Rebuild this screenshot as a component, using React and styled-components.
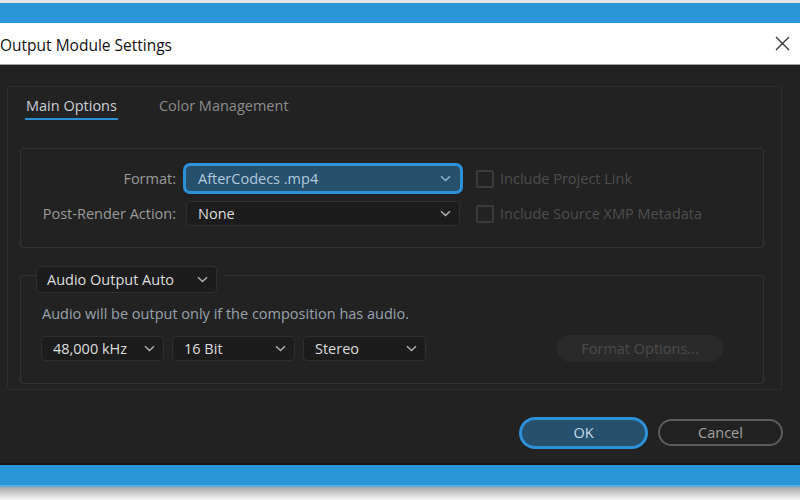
import React from "react";
import styled, { createGlobalStyle } from "styled-components";

const GlobalStyle = createGlobalStyle`
  html, body {
    margin: 0;
    padding: 0;
  }
  body {
    width: 800px;
    height: 500px;
    overflow: hidden;
    background: #f4f4f4;
    font-family: "Open Sans", "Noto Sans", sans-serif;
  }
`;

const Window = styled.div`
  display: flex;
  flex-direction: column;
  height: 500px;
`;

const TopEdge = styled.div`
  height: 3px;
  background: #e4e4e4;
`;

const BlueBand = styled.div`
  height: 20px;
  flex-shrink: 0;
  background: #2996d8;
  border-bottom: ${(p) => (p.$bottom ? "2px solid #5aaee2" : "none")};
`;

const Shadow = styled.div`
  flex: 1;
  background: linear-gradient(#a9a9a9, #f6f6f6);
`;

const TitleBar = styled.div`
  height: 41px;
  flex-shrink: 0;
  background: #fff;
  border-bottom: 1px solid #a3a3a3;
  display: flex;
  align-items: center;
  justify-content: space-between;
  padding: 0 10px 0 0;
`;

const Title = styled.span`
  font-size: 15.5px;
  color: #111;
  padding-top: 2px;
`;

const Content = styled.div`
  height: 400px;
  flex-shrink: 0;
  background: #222;
  border-bottom: 2px solid #171411;
  padding: 21px 17px 0 7px;
  box-sizing: border-box;
  display: flex;
  flex-direction: column;
`;

const Frame = styled.div`
  border: 1px solid #2d2d2d;
  border-radius: 3px;
  margin-right: 1px;
  padding: 0 17px 5px 12px;
`;

const TabBar = styled.div`
  display: flex;
  gap: 40px;
  padding-left: 5px;
  margin-bottom: 28px;
`;

const Tab = styled.div`
  font-size: 14.5px;
  line-height: 18px;
  padding: 10px 1px 3px;
  color: ${(p) => (p.$active ? "#c9cfd6" : "#8c8c8c")};
  border-bottom: 2px solid ${(p) => (p.$active ? "#2b8fd8" : "transparent")};
`;

const Group = styled.div`
  border: 1px solid #323232;
  border-radius: 3px;
  padding: ${(p) => p.$pad};
  margin-top: ${(p) => p.$top || 0}px;
`;

const FormGrid = styled.div`
  display: grid;
  grid-template-columns: 155px 274px auto;
  column-gap: 10px;
  row-gap: 10px;
  align-items: center;
`;

const Label = styled.span`
  text-align: right;
  font-size: 14.5px;
  color: #9b9b9b;
`;

const Select = styled.div`
  box-sizing: border-box;
  width: ${(p) => p.$w}px;
  height: ${(p) => p.$h || 25}px;
  display: flex;
  align-items: center;
  justify-content: space-between;
  padding: 0 8px 0 ${(p) => p.$pl || 11}px;
  border-radius: 4px;
  font-size: 14.5px;
  background: ${(p) => (p.$focus ? "#27506c" : "#1c1c1c")};
  color: ${(p) => (p.$focus ? "#b3cadd" : "#dedede")};
  border: 1px solid ${(p) => (p.$focus ? "#27506c" : "#2f2f2f")};
  box-shadow: ${(p) => (p.$focus ? "0 0 0 3px #2b91d9" : "none")};
`;

const CheckRow = styled.label`
  display: flex;
  align-items: center;
  gap: 6px;
  margin-left: 6px;
  font-size: 14.5px;
  color: #4e4e4e;
`;

const Box = styled.span`
  box-sizing: border-box;
  width: 18px;
  height: 18px;
  border: 2px solid #3b3b3b;
  border-radius: 2px;
`;

const LegendRow = styled.div`
  display: flex;
  margin-top: -10px;
  padding-left: 15px;
`;

const LegendWrap = styled.div`
  background: #222;
  padding-right: 7px;
`;

const Hint = styled.div`
  font-size: 14.5px;
  line-height: 18px;
  color: #99a3ae;
  margin: 12px 0 0 21px;
`;

const AudioRow = styled.div`
  display: flex;
  align-items: center;
  gap: 8px;
  margin: 12px 40px 0 20px;
`;

const PillButton = styled.button`
  box-sizing: border-box;
  margin-left: auto;
  width: 166px;
  height: 27px;
  border-radius: 14px;
  border: none;
  background: #2a2a2a;
  color: #4b4b4b;
  font-family: inherit;
  font-size: 14.5px;
`;

const Buttons = styled.div`
  display: flex;
  justify-content: flex-end;
  align-items: center;
  gap: 13px;
  margin-top: 29px;
`;

const DialogButton = styled.button`
  box-sizing: border-box;
  width: ${(p) => p.$w}px;
  height: ${(p) => p.$h}px;
  border-radius: 14px;
  font-family: inherit;
  font-size: 14.5px;
  padding: 0;
  background: ${(p) => (p.$primary ? "#27506c" : "transparent")};
  color: ${(p) => (p.$primary ? "#c4dbeb" : "#a2a2a2")};
  border: ${(p) => (p.$primary ? "none" : "2px solid #5e5e5e")};
  box-shadow: ${(p) => (p.$primary ? "0 0 0 3px #2b91d9" : "none")};
`;

function Chevron({ color = "#b0b0b0" }) {
  return (
    <svg width="11" height="7" viewBox="0 0 11 7">
      <path d="M1 1.2l4.5 4.3 4.5-4.3" fill="none" stroke={color} strokeWidth="1.5" />
    </svg>
  );
}

function CloseIcon() {
  return (
    <svg width="15" height="15" viewBox="0 0 15 15">
      <path d="M1 1l13 13M14 1L1 14" stroke="#333" strokeWidth="1.3" />
    </svg>
  );
}

function Dropdown({ value, w, h, pl, focus }) {
  return (
    <Select $w={w} $h={h} $pl={pl} $focus={focus}>
      <span>{value}</span>
      <Chevron color={focus ? "#8fb3cf" : "#b0b0b0"} />
    </Select>
  );
}

export default function App() {
  const audio = ["48,000 kHz", "16 Bit", "Stereo"];

  return (
    <>
      <GlobalStyle />
      <Window>
        <TopEdge />
        <BlueBand />
        <TitleBar>
          <Title>Output Module Settings</Title>
          <CloseIcon />
        </TitleBar>
        <Content>
          <Frame>
            <TabBar>
              <Tab $active>Main Options</Tab>
              <Tab>Color Management</Tab>
            </TabBar>

            <Group $pad="17px 0 21px 0">
              <FormGrid>
                <Label>Format:</Label>
                <Dropdown value="AfterCodecs .mp4" w={274} focus />
                <CheckRow>
                  <Box />
                  Include Project Link
                </CheckRow>
                <Label>Post-Render Action:</Label>
                <Dropdown value="None" w={274} />
                <CheckRow>
                  <Box />
                  Include Source XMP Metadata
                </CheckRow>
              </FormGrid>
            </Group>

            <Group $pad="0 0 21px 0" $top={27}>
              <LegendRow>
                <LegendWrap>
                  <Dropdown value="Audio Output Auto" w={181} h={27} pl={10} />
                </LegendWrap>
              </LegendRow>
              <Hint>Audio will be output only if the composition has audio.</Hint>
              <AudioRow>
                {audio.map((v) => (
                  <Dropdown key={v} value={v} w={123} />
                ))}
                <PillButton>Format Options...</PillButton>
              </AudioRow>
            </Group>
          </Frame>

          <Buttons>
            <DialogButton $primary $w={123} $h={26}>OK</DialogButton>
            <DialogButton $w={125} $h={27}>Cancel</DialogButton>
          </Buttons>
        </Content>
        <BlueBand $bottom />
        <Shadow />
      </Window>
    </>
  );
}
